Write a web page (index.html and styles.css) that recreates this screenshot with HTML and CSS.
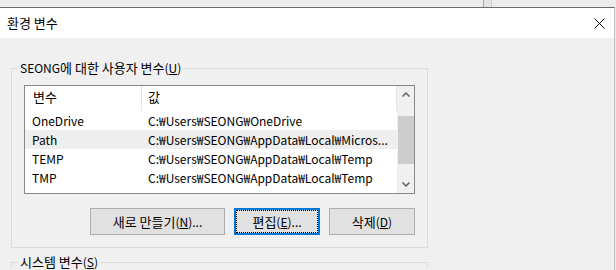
FILE: index.html
```html
<!doctype html>
<html>

<head>
    <title>환경 변수</title>
    <meta charset="utf-8">
    <link rel="stylesheet" href="styles.css">
</head>

<body>
    <div class="desktop"></div>
    <div class="window">
        <div class="titlebar">
            <span class="title ko">환경 변수</span>
            <svg class="close" width="11" height="11" viewBox="0 0 11 11">
                <path d="M0.5 0.5 L10.5 10.5 M10.5 0.5 L0.5 10.5" stroke="#000" stroke-width="1" fill="none"/>
            </svg>
        </div>
        <div class="content">
            <fieldset class="group">
                <legend>SEONG<span class="ko">에 대한 사용자 변수</span>(<u>U</u>)</legend>
                <div class="listview">
                    <div class="list">
                        <div class="row head">
                            <div class="c1 ko">변수</div>
                            <div class="c2 ko">값</div>
                        </div>
                        <div class="row">
                            <div class="c1">OneDrive</div>
                            <div class="c2">C:₩Users₩SEONG₩OneDrive</div>
                        </div>
                        <div class="row hover">
                            <div class="c1">Path</div>
                            <div class="c2">C:₩Users₩SEONG₩AppData₩Local₩Micros...</div>
                        </div>
                        <div class="row">
                            <div class="c1">TEMP</div>
                            <div class="c2">C:₩Users₩SEONG₩AppData₩Local₩Temp</div>
                        </div>
                        <div class="row">
                            <div class="c1">TMP</div>
                            <div class="c2">C:₩Users₩SEONG₩AppData₩Local₩Temp</div>
                        </div>
                    </div>
                    <div class="scrollbar">
                        <div class="arrow">
                            <svg width="8" height="5" viewBox="0 0 8 5"><path d="M0.5 4.5 L4 1 L7.5 4.5" stroke="#606060" stroke-width="1.5" fill="none"/></svg>
                        </div>
                        <div class="track">
                            <div class="thumb"></div>
                        </div>
                        <div class="arrow">
                            <svg width="8" height="5" viewBox="0 0 8 5"><path d="M0.5 0.5 L4 4 L7.5 0.5" stroke="#606060" stroke-width="1.5" fill="none"/></svg>
                        </div>
                    </div>
                </div>
                <div class="buttons">
                    <button class="btn wide"><span class="ko">새로 만들기</span>(<u>N</u>)...</button>
                    <button class="btn focus"><span class="ko">편집</span>(<u>E</u>)...</button>
                    <button class="btn"><span class="ko">삭제</span>(<u>D</u>)</button>
                </div>
            </fieldset>
            <fieldset class="group system">
                <legend><span class="ko">시스템 변수</span>(<u>S</u>)</legend>
            </fieldset>
        </div>
    </div>
</body>

</html>
```

FILE: styles.css
```css
* {
    box-sizing: border-box;
}

body {
    margin: 0;
    width: 616px;
    height: 270px;
    overflow: hidden;
    background-color: #e9e9e9;
    font-family: "Noto Sans CJK KR", "Noto Sans", sans-serif;
    font-size: 12px;
    color: #000;
}

/* hangul in the system font looks a bit bigger than the latin */
.ko {
    font-size: 13px;
}

.desktop {
    height: 7px;
    background: linear-gradient(to right, #ececec 483px, #a8a8a8 483px, #a8a8a8 484px, #e4e4e4 484px, #e4e4e4 491px, #cfcfcf 491px, #cfcfcf 492px, #ececec 492px);
}

.window {
    width: 615px;
    height: 263px;
    overflow: hidden;
    border-top: 1px solid #6b6b6b;
    border-right: 1px solid #c4c4c4;
    background-color: #f0f0f0;
}

.titlebar {
    height: 30px;
    background-color: #fff;
    display: flex;
    align-items: center;
    justify-content: space-between;
    padding: 0 9px 0 7px;
}

.title {
    line-height: 14px;
}

.close {
    display: block;
}

.content {
    padding: 23px 0 0 11px;
}

.group {
    width: 417px;
    margin: 0;
    padding: 10px 12px 12px 12px;
    border: 1px solid #dcdcdc;
}

.group legend {
    padding: 0 2px;
    margin-left: -6px;
    line-height: 14px;
}

.system {
    margin-top: 8px;
    height: 12px;
    padding: 0 12px;
    border-bottom: none;
}

.system legend {
    line-height: 12px;
}

.listview {
    display: flex;
    height: 109px;
    border: 1px solid #828790;
    background-color: #fff;
}

.list {
    width: 372px;
}

.row {
    display: flex;
    height: 19px;
    align-items: center;
}

.row.head {
    height: 25px;
}

.row.head .c1 {
    border-right: 1px solid #e5e5e5;
    padding-left: 8px;
}

.row.head .c2 {
    border-right: 1px solid #e5e5e5;
    padding-left: 6px;
}

.row.head div {
    height: 25px;
    line-height: 22px;
}

.row.hover {
    background-color: #eeeeee;
}

.c1 {
    width: 117px;
    padding-left: 7px;
    white-space: nowrap;
}

.c2 {
    flex: 1;
    padding-left: 6px;
    white-space: nowrap;
}

.scrollbar {
    width: 17px;
    display: flex;
    flex-direction: column;
    background-color: #f0f0f0;
}

.arrow {
    height: 17px;
    display: flex;
    align-items: center;
    justify-content: center;
}

.arrow svg {
    display: block;
}

.track {
    flex: 1;
    padding: 13px 0 12px 1px;
}

.thumb {
    height: 48px;
    background-color: #cdcdcd;
}

.buttons {
    display: flex;
    justify-content: flex-end;
    gap: 9px;
    margin-top: 14px;
}

.btn {
    height: 27px;
    width: 86px;
    padding: 0;
    font-family: inherit;
    font-size: 12px;
    color: #000;
    background-color: #e1e1e1;
    border: 1px solid #adadad;
}

.btn.wide {
    width: 135px;
}

.btn.focus {
    border: 2px solid #0078d7;
    outline: 1px dotted #000;
    outline-offset: -3px;
}
```
